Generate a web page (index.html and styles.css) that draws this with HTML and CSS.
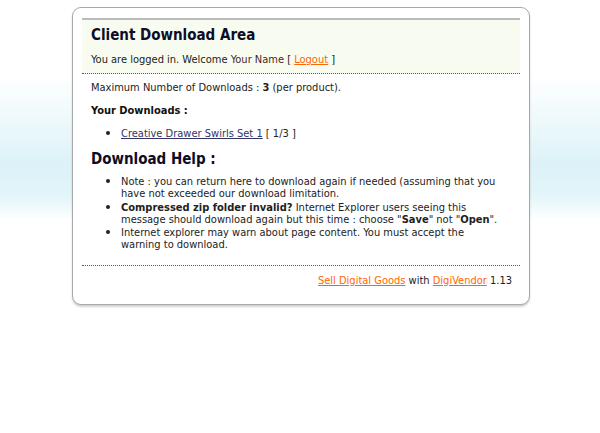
FILE: index.html
```html
<!DOCTYPE html>
<html>
<head>
<meta charset="utf-8">
<link rel="stylesheet" href="styles.css">
</head>
<body>
<div class="card">
  <div class="header">
    <h1 class="title">Client Download Area</h1>
    <p class="welcome">You are logged in. Welcome <span class="name">Your Name</span> [ <a class="orange" href="#">Logout</a> ]</p>
  </div>
  <div class="content">
    <p class="max">Maximum Number of Downloads : <b>3</b> (per product).</p>
    <p class="sub">Your Downloads :</p>
    <ul class="list dl">
      <li><a class="item" href="#">Creative Drawer Swirls Set 1</a> [ 1/3 ]</li>
    </ul>
    <h2 class="help">Download Help :</h2>
    <ul class="list notes">
      <li>Note : you can return here to download again if needed (assuming that you have not exceeded our download limitation.</li>
      <li><b>Compressed zip folder invalid?</b> Internet Explorer users seeing this message should download again but this time : choose "<b>Save</b>" not "<b>Open</b>".</li>
      <li>Internet explorer may warn about page content. You must accept the warning to download.</li>
    </ul>
  </div>
  <div class="footer">
    <a class="orange" href="#">Sell Digital Goods</a> with <a class="orange" href="#">DigiVendor</a> 1.13
  </div>
</div>
</body>
</html>
```
FILE: styles.css
```css
html, body {
  margin: 0;
  padding: 0;
}
body {
  height: 433px;
  background: linear-gradient(to bottom, #ffffff 0px, #ffffff 75px, #eef9fb 120px, #dcf2f8 165px, #e2f5f9 195px, #ffffff 220px, #ffffff 433px);
  font-family: "DejaVu Sans Condensed", "DejaVu Sans", Verdana, sans-serif;
  font-stretch: condensed;
  font-size: 11px;
  color: #222;
}
.card {
  box-sizing: border-box;
  margin: 7px 0 0 72px;
  width: 458px;
  height: 298px;
  background: #fff;
  border: 1px solid #a8a8a8;
  border-radius: 9px;
  padding: 10px 9px 0;
  box-shadow: 0 2px 2px rgba(0,0,0,0.18);
}
.header {
  border-top: 2px solid #bcbcbc;
  background: #f8fcf0;
  padding: 6px 9px 7px;
  border-bottom: 1px dotted #555;
}
.title {
  margin: 0;
  font-size: 15px;
  line-height: 18px;
  font-weight: bold;
  color: #0d0d26;
}
.welcome {
  margin: 9px 0 0;
  line-height: 13px;
}
.name {
  color: #4a1f1f;
}
.orange {
  color: #ff6600;
}
.content {
  padding: 7px 9px 0;
}
.max {
  margin: 0;
  line-height: 13px;
}
.sub {
  margin: 10px 0 0;
  font-weight: bold;
  line-height: 13px;
  color: #111;
}
.list {
  margin: 0;
  padding-left: 30px;
  line-height: 12.2px;
}
.list li::marker {
  font-size: 13px;
}
.dl {
  margin-top: 10px;
}
.item {
  color: #333366;
}
.help {
  margin: 10px 0 0;
  font-size: 15px;
  line-height: 18px;
  font-weight: bold;
  color: #0d0d26;
}
.notes {
  margin-top: 7px;
  padding-right: 8px;
}
.footer {
  margin-top: 14px;
  border-top: 1px dotted #555;
  padding: 8px 8px 0;
  text-align: right;
  line-height: 13px;
}
```
